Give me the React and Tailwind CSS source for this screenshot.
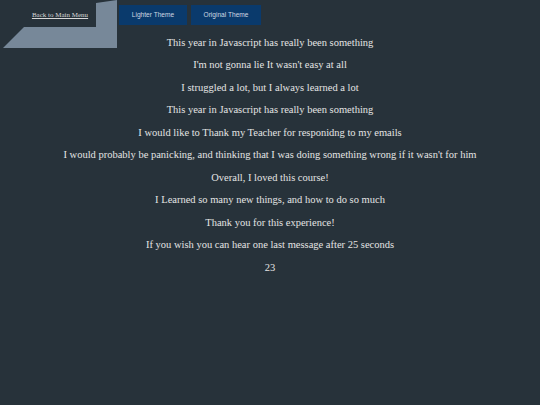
export default function App() {
  const lines = [
    "This year in Javascript has really been something",
    "I'm not gonna lie It wasn't easy at all",
    "I struggled a lot, but I always learned a lot",
    "This year in Javascript has really been something",
    "I would like to Thank my Teacher for responidng to my emails",
    "I would probably be panicking, and thinking that I was doing something wrong if it wasn't for him",
    "Overall, I loved this course!",
    "I Learned so many new things, and how to do so much",
    "Thank you for this experience!",
    "If you wish you can hear one last message after 25 seconds",
    "23",
  ];
  return (
    <div className="w-[540px] h-[405px] bg-[#27323a] overflow-hidden">
      <div className="flex items-start h-[28px]">
        <a
          href="#"
          className="ml-[3px] shrink-0 w-[114px] h-[48px] border-l-[21px] border-t-[3px] border-r-[21px] border-b-[21px] border-l-transparent border-t-transparent border-r-[#778899] border-b-[#778899] flex items-center justify-center text-[7px] underline text-[#d8d8d8] relative z-0"
          style={{ fontFamily: '"Liberation Serif", serif' }}
        >
          Back to Main Menu
        </a>
        <div className="flex gap-[4px] mt-[5px] ml-[2px]">
          <button className="w-[68px] h-[20px] bg-[#0a3a6c] text-[#cfd8e2] text-[6.6px]" style={{ fontFamily: '"Liberation Sans", sans-serif' }}>
            Lighter Theme
          </button>
          <button className="w-[70px] h-[20px] bg-[#0a3a6c] text-[#cfd8e2] text-[6.6px]" style={{ fontFamily: '"Liberation Sans", sans-serif' }}>
            Original Theme
          </button>
        </div>
      </div>
      <div
        className="relative z-10 flex flex-col items-center gap-[10px] pt-[8.5px] text-[#e4e4e4] text-[10.5px] leading-[12.5px]"
        style={{ fontFamily: '"Liberation Serif", serif' }}
      >
        {lines.map((l, i) => (
          <p key={i} className="text-center">{l}</p>
        ))}
      </div>
    </div>
  );
}
